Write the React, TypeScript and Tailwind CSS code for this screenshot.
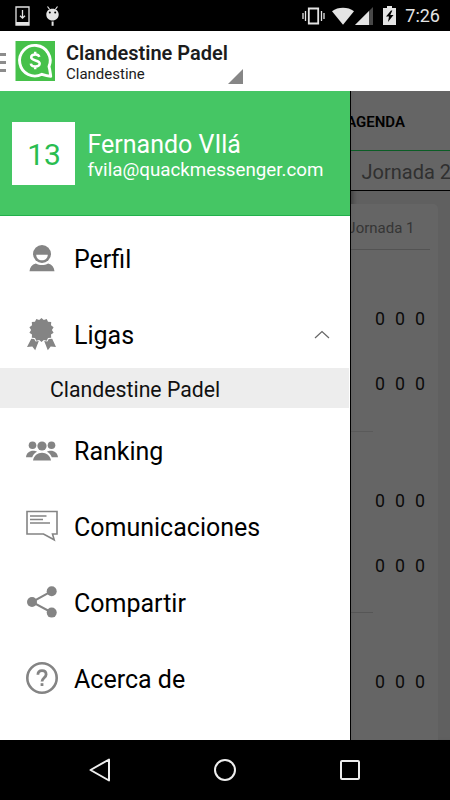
import type { ReactNode } from "react";

const ProfileIcon = () => (
  <svg width="32" height="32" viewBox="0 0 32 32" fill="#848484">
    <circle cx="16" cy="11" r="9" />
    <path d="M10.200 11.700h11.600c-.2 3.600-2.700 5.600-5.800 5.600s-5.600-2-5.800-5.600z" fill="#fff" />
    <path d="M3.500 28.300c.4-4 2.400-6.700 6.400-7.800 3.800 2 8.400 2 12.200 0 4 1.100 6 3.800 6.400 7.800z" />
  </svg>
);

const BadgeIcon = () => (
  <svg width="32" height="34" viewBox="0 0 32 34" fill="#848484">
    <path d="M15.500 0l2.300 2 2.900-1 1.300 2.800 3.200.3-.2 3.200 2.600 1.900-1.700 2.700 1.700 2.800-2.600 1.900.2 3.200-3.200.3-1.300 2.700-2.900-.9-2.300 2.100-2.300-2.100-2.900.9L9 20.100l-3.200-.3.200-3.200-2.600-1.900 1.700-2.800-1.700-2.700L6 7.300l-.2-3.200L9 3.800 10.300 1l2.900 1z" />
    <path d="M5.300 20.800L8.200 21l1.500 2.600 3.100-.6-3.600 9.200-2.900-3.700-5.300.6zM26.200 20.800l-3.400.2-1.500 2.600-3.100-.6 3.600 9.200 2.900-3.700 5.300.6z" />
  </svg>
);

const GroupIcon = () => (
  <svg width="32" height="22" viewBox="0 0 32 22" className="mb-[1px]" fill="#848484">
    <circle cx="6.500" cy="5.200" r="3.800" />
    <circle cx="25.500" cy="5.200" r="3.800" />
    <circle cx="16" cy="6" r="4.600" />
    <path d="M7 20.500c.8-5 4.600-7.800 9-7.800s8.200 2.800 9 7.800z" />
    <path d="M0 17.300c.4-4.300 3.400-6.500 7.200-6.500 1.400 0 2.800.3 3.800 1-2.300 1.200-3.900 3-4.800 5.500zM32 17.300c-.4-4.300-3.400-6.500-7.200-6.500-1.400 0-2.800.3-3.800 1 2.300 1.200 3.900 3 4.800 5.500z" />
  </svg>
);

const MessageIcon = () => (
  <svg width="32" height="32" viewBox="0 0 32 32" className="mb-[2px]" fill="none" stroke="#848484">
    <path d="M1 1.500h30v22.500h-4.500l1.700 5.800-10.700-5.800H1z" strokeWidth="1.600" />
    <path d="M4 6h16.500M4 9.500h13M4 13h20" strokeWidth="1.500" />
  </svg>
);

const ShareIcon = () => (
  <svg width="32" height="32" viewBox="0 0 32 32" className="mb-[2px]" fill="#848484">
    <path d="M25.700 5.200L6 16l19.700 10.500" fill="none" stroke="#848484" strokeWidth="2" />
    <circle cx="25.700" cy="5.200" r="5" />
    <circle cx="6" cy="16" r="5" />
    <circle cx="25.700" cy="26.600" r="5" />
  </svg>
);

const HelpIcon = () => (
  <svg width="32" height="32" viewBox="0 0 32 32" className="mb-[2px]" fill="none" stroke="#848484">
    <circle cx="16" cy="16" r="14.700" strokeWidth="2.600" />
    <path d="M11.900 12.800c0-2.700 1.600-4.200 4.100-4.200s4.100 1.500 4.100 3.800c0 3.100-4.100 3.600-4.100 7.200" strokeWidth="2.800" />
    <path d="M14.600 22.600h2.800" strokeWidth="2.800" />
  </svg>
);

const StatusBar = () => (
  <div className="flex h-[31px] items-center bg-black pl-[15px] pr-[10px] text-[#e4e4e4]">
    <svg width="15" height="20" viewBox="0 0 15 20" className="mt-[1px]">
      <path d="M1 1h13v18H1z" fill="none" stroke="currentColor" strokeWidth="1.300" />
      <path d="M1 16h13v3H1z" fill="currentColor" />
      <path d="M7.500 4v8M5 9.700l2.500 2.500L10 9.700" fill="none" stroke="currentColor" strokeWidth="1.300" />
    </svg>
    <svg width="15" height="20" viewBox="0 0 15 20" className="ml-[15px]" fill="currentColor">
      <path d="M2.500.5l2.200 3M12.500.5l-2.200 3" stroke="currentColor" strokeWidth="1.200" />
      <path d="M1.300 8.500C1.300 5 3.800 2.700 7.500 2.700s6.200 2.300 6.200 5.800-2.700 6-6.200 6-6.200-2.500-6.200-6z" />
      <circle cx="4.800" cy="6.500" r="1" fill="#000" />
      <circle cx="10.200" cy="6.500" r="1" fill="#000" />
      <path d="M6.600 15.500h2v4.300h-2z" />
    </svg>
    <svg width="23" height="18" viewBox="0 0 23 18" className="ml-auto" fill="none" stroke="currentColor">
      <path d="M6.800 1.500h9.400v15H6.800z" strokeWidth="1.800" />
      <path d="M1 6v6M3.500 4v10M19.500 4v10M22 6v6" strokeWidth="1.300" />
    </svg>
    <svg width="24" height="18" viewBox="0 0 24 18" className="ml-[6px]">
      <path d="M1 4.200C7-.4 17-.4 23 4.200L12 17.700z" fill="currentColor" />
    </svg>
    <svg width="18" height="18" viewBox="0 0 18 18">
      <path d="M18 0v18H0z" fill="#484848" />
      <path d="M14 4v14H0z" fill="currentColor" />
    </svg>
    <svg width="13" height="19" viewBox="0 0 13 19" className="ml-[10px]">
      <path d="M4 0h5v2h4v17H0V2h4z" fill="currentColor" />
      <path d="M8 4.500L3 10.500h3L5 16l5.500-7H7.300l2-4.500z" fill="#000" />
    </svg>
    <span className="ml-[9px] mt-[1px] text-[18px] leading-[20px]">7:26</span>
  </div>
);

const AppBar = () => (
  <div className="flex h-[60px] bg-white text-[#1c1c1c]">
    <div className="mt-[22px] flex w-[6px] flex-col gap-[5px]">
      <div className="h-[3px] bg-[#8c8c8c]" />
      <div className="h-[3px] bg-[#8c8c8c]" />
      <div className="h-[3px] bg-[#8c8c8c]" />
    </div>
    <svg width="40" height="40" viewBox="0 0 40 40" className="ml-[9px] mt-[10px]" fill="none">
      <path d="M.5 0H40v40H.5z" fill="#46c14a" />
      <path
        d="M34 25.600A15.300 15.300 0 1 0 26.900 33.300C29.900 34.300 32.400 35 35.700 35.300 35.200 31.700 35 28.600 34 25.600z"
        stroke="#fff"
        strokeWidth="2.900"
        strokeLinejoin="round"
      />
      <path
        d="M24.400 15.900c-.5-1.700-1.900-2.500-4-2.500-2.500 0-4.200 1.100-4.200 2.900 0 4.100 8.500 2.200 8.500 6.300 0 1.800-1.700 2.900-4.400 2.900s-4.200-1.100-4.500-2.900M20.200 10.700v2.800M20.200 25.500v2.800"
        stroke="#fff"
        strokeWidth="2.500"
      />
    </svg>
    <div className="ml-[11px] flex-none pt-[11px]">
      <div className="text-[20px] font-semibold leading-[23px]">Clandestine Padel</div>
      <div className="text-[15px] leading-[18px]">Clandestine</div>
    </div>
    <svg width="15" height="15" viewBox="0 0 15 15" className="mt-[38px]">
      <path d="M15 0v15H0z" fill="#868686" />
    </svg>
  </div>
);

const MenuItem = ({ icon, label, children }: { icon: ReactNode; label: string; children?: ReactNode }) => (
  <div className="flex h-[76px] flex-none items-center pl-[26px] pr-[20px] text-[25px] text-black">
    <div className="flex w-[32px] justify-center">{icon}</div>
    <span className="ml-[16px] pt-[2px] leading-[30px]">{label}</span>
    {children}
  </div>
);

const Drawer = () => (
  <div className="flex w-[350px] flex-none flex-col bg-white">
    <div className="flex h-[125px] border-b border-[#22b04b] bg-[#45c664] pl-[12px] text-white">
      <div className="mt-[31px] flex h-[63px] w-[63px] items-center justify-center bg-white pl-[1px] pt-[1px] text-[30px] text-[#29bd50]">
        13
      </div>
      <div className="ml-[12.500px] mt-[39px]">
        <div className="text-[25px] leading-[30px]">Fernando VIlá</div>
        <div className="-mt-[1px] text-[18.750px] leading-[22px]">fvila@quackmessenger.com</div>
      </div>
    </div>
    <div className="pt-[5px]">
      <MenuItem icon={<ProfileIcon />} label="Perfil" />
      <div className="-mb-[5px]">
        <MenuItem icon={<BadgeIcon />} label="Ligas">
          <svg width="16" height="9" viewBox="0 0 16 9" className="mb-[2px] ml-auto">
            <path d="M1 8l7-6.500L15 8" fill="none" stroke="#666" strokeWidth="1.200" />
          </svg>
        </MenuItem>
      </div>
      <div className="mr-[1px] flex h-[40px] items-center bg-[#ededed] pl-[50px] pt-[3px] text-[21.250px] text-[#111]">
        Clandestine Padel
      </div>
      <div className="pt-[5px]">
        <MenuItem icon={<GroupIcon />} label="Ranking" />
        <MenuItem icon={<MessageIcon />} label="Comunicaciones" />
        <MenuItem icon={<ShareIcon />} label="Compartir" />
        <MenuItem icon={<HelpIcon />} label="Acerca de" />
      </div>
    </div>
  </div>
);

const Score = () => (
  <div className="flex h-[65px] items-center justify-end gap-[10px] pr-[13px] pt-[2px] text-[17.750px] text-[#0b0b0b]">
    <span>0</span>
    <span>0</span>
    <span>0</span>
  </div>
);

// The dimmed agenda screen that shows past the open drawer
const Agenda = () => (
  <div className="flex min-w-0 flex-1 flex-col overflow-hidden border-l border-black bg-[#606060] shadow-[inset_5px_0_5px_-3px_#404040]">
    <div className="flex h-[60px] items-center justify-end border-b border-[#0b5d25] bg-[#666]/90 pr-[45px] pt-[4px] text-[15px] font-semibold text-black">
      AGENDA
    </div>
    <div className="flex h-[40px] items-center whitespace-nowrap border-b border-black bg-[#666]/90 pl-[10.500px] pt-[2px] text-[20px] text-[#303030]">
      Jornada 2
    </div>
    <div className="mr-[12px] mt-[13px] flex-1 rounded-tr-[5px] bg-[#666]/90">
      <div className="mr-[8px] flex h-[46px] items-center justify-end whitespace-nowrap border-b border-[#535353] pr-[15.500px] pt-[3px] text-[15px] text-[#353535]">
        Jornada 1
      </div>
      <div className="h-[36px]" />
      <Score />
      <Score />
      <div className="mr-[65px] mt-[15px] h-[1px] bg-[#5a5a5a]" />
      <div className="h-[36px]" />
      <Score />
      <Score />
      <div className="mr-[65px] mt-[14px] h-[1px] bg-[#565656]" />
      <div className="h-[36px]" />
      <Score />
    </div>
  </div>
);

const NavigationBar = () => (
  <div className="flex h-[60px] items-center justify-between bg-black px-[88px]">
    <svg width="24" height="24" viewBox="0 0 24 24" fill="none" stroke="#eee" strokeWidth="2">
      <path d="M2.500 12L21 1.500v21z" strokeLinejoin="round" />
    </svg>
    <svg width="24" height="24" viewBox="0 0 24 24" fill="none" stroke="#eee" strokeWidth="2">
      <circle cx="12" cy="12" r="10" />
    </svg>
    <svg width="24" height="24" viewBox="0 0 24 24" fill="none" stroke="#eee" strokeWidth="2">
      <rect x="3" y="3" width="18" height="18" rx="1" />
    </svg>
  </div>
);

export default function App() {
  return (
    <div className="flex h-[800px] w-[450px] flex-col overflow-hidden bg-black font-['Roboto',sans-serif]">
      <StatusBar />
      <AppBar />
      <div className="flex h-[649px] flex-none overflow-hidden">
        <Drawer />
        <Agenda />
      </div>
      <NavigationBar />
    </div>
  );
}
